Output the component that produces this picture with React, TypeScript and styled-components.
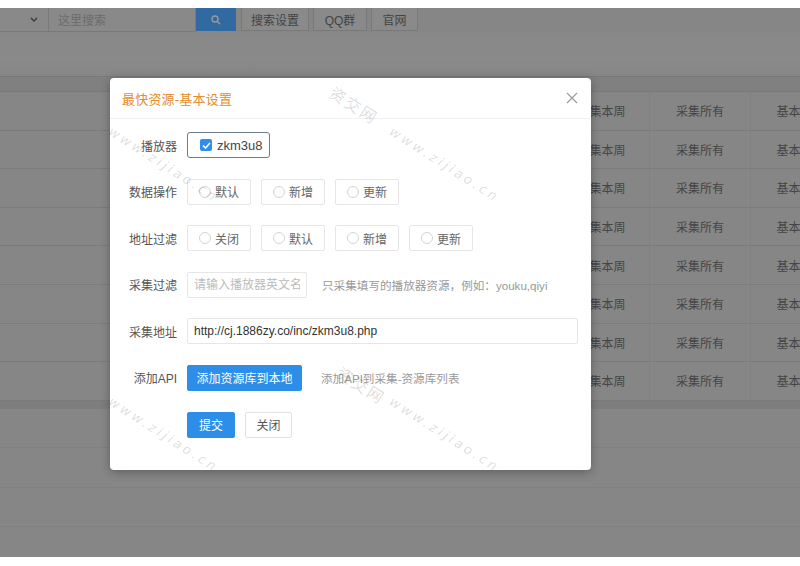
import React from "react";
import styled, { createGlobalStyle } from "styled-components";

const Global = createGlobalStyle`
  html, body { margin: 0; padding: 0; background: #fff; }
  body { font-family: "Liberation Sans", "Noto Sans CJK SC", sans-serif; }
  * { box-sizing: border-box; }
`;

const FONT = `"Liberation Sans", "Noto Sans CJK SC", sans-serif`;

const Screen = styled.div`
  position: relative;
  width: 800px;
  height: 566px;
  padding-top: 8px;
  overflow: hidden;
  background: #fff;
`;

const Page = styled.div`
  position: relative;
  height: 549px;
  background: #d2d2d2;
  overflow: hidden;
  display: flex;
  flex-direction: column;
`;

const Toolbar = styled.div`
  display: flex;
  height: 24px;
  align-items: stretch;
`;

const SelectBox = styled.div`
  width: 48px;
  display: flex;
  align-items: center;
  justify-content: flex-end;
  padding-right: 10px;
  background: #d6d6d6;
  border-bottom: 1px solid #bdbdbd;
`;

const SearchInput = styled.div`
  width: 148px;
  display: flex;
  align-items: center;
  padding-left: 9px;
  font-size: 12px;
  color: #a9a9a9;
  background: #d6d6d6;
  border: 1px solid #bdbdbd;
  border-top: none;
`;

const SearchBtn = styled.div`
  width: 40px;
  height: 23px;
  display: flex;
  align-items: center;
  justify-content: center;
  background: #4ea4fc;
`;

const ToolBtn = styled.div<{ $w: number; $ml: number }>`
  width: ${(p) => p.$w}px;
  margin-left: ${(p) => p.$ml}px;
  height: 23px;
  display: flex;
  align-items: center;
  justify-content: center;
  font-size: 12px;
  color: #6a6a6a;
  background: #d8d8d8;
  border: 1px solid #bdbdbd;
  border-top: none;
`;

const Spacer = styled.div`
  height: 45px;
  background: linear-gradient(#d4d4d4, #d8d8d8 60%, #d2d2d2);
  border-bottom: 1px solid #bcbcbc;
`;

const TableHead = styled.div`
  height: 15px;
  background: #c8c8c8;
  border-bottom: 1px solid #bdbdbd;
`;

const Row = styled.div`
  display: grid;
  grid-template-columns: 553px 96px 101px 100px;
  height: 38.6px;
  border-bottom: 1px solid #c0c0c0;
`;

const Cell = styled.div`
  display: flex;
  align-items: center;
  justify-content: center;
  font-size: 12px;
  color: #6c6c6c;
  border-left: 1px solid #c8c8c8;
  white-space: nowrap;
  &:first-child { border-left: none; }
`;

const TableFoot = styled.div`
  height: 8px;
  background: #c6c6c6;
`;

const BlankRow = styled.div`
  height: 39.5px;
  border-bottom: 1px solid #c8c8c8;
`;

const Shade = styled.div`
  position: absolute;
  inset: 0;
  background: rgba(0, 0, 0, 0.36);
`;

const Modal = styled.div`
  position: absolute;
  left: 110px;
  top: 78px;
  width: 481px;
  height: 392px;
  background: #fff;
  border-radius: 4px;
  box-shadow: 0 2px 10px rgba(0, 0, 0, 0.3);
  overflow: hidden;
  display: flex;
  flex-direction: column;
`;

const ModalHeader = styled.div`
  height: 41px;
  flex: none;
  display: flex;
  align-items: center;
  justify-content: space-between;
  padding: 0 13px 0 12px;
  border-bottom: 1px solid #efefef;
`;

const Title = styled.div`
  font-size: 13px;
  color: #e38d2c;
  letter-spacing: 0.2px;
`;

const CloseX = styled.div`
  width: 12px;
  height: 12px;
  display: flex;
`;

const Body = styled.div`
  padding-top: 13px;
  display: flex;
  flex-direction: column;
  gap: 20.6px;
`;

const FormRow = styled.div`
  display: flex;
  align-items: center;
  height: 26px;
`;

const Label = styled.div`
  width: 67px;
  margin-right: 10px;
  text-align: right;
  font-size: 12px;
  color: #555;
  white-space: nowrap;
`;

const Indent = styled.div`
  width: 77px;
  flex: none;
`;

const Options = styled.div`
  display: flex;
  gap: 10px;
`;

const CheckChip = styled.div`
  width: 83px;
  height: 26px;
  display: flex;
  align-items: center;
  gap: 5px;
  padding-left: 12px;
  border: 1px solid #6b7c8c;
  border-radius: 3px;
  font-size: 13px;
  color: #444;
`;

const CheckBox = styled.span`
  width: 12px;
  height: 12px;
  border-radius: 2px;
  background: #2f8ded;
  display: flex;
  align-items: center;
  justify-content: center;
`;

const RadioOpt = styled.div`
  width: 64px;
  height: 26px;
  display: flex;
  align-items: center;
  gap: 4px;
  padding-left: 11px;
  border: 1px solid #e6e6e6;
  border-radius: 2px;
  font-size: 12px;
  color: #666;
`;

const Circle = styled.span`
  width: 12px;
  height: 12px;
  border: 1px solid #d4d4d4;
  border-radius: 50%;
`;

const TextInput = styled.input<{ $w: number }>`
  width: ${(p) => p.$w}px;
  height: 26px;
  padding: 0 6px;
  border: 1px solid #e6e6e6;
  border-radius: 2px;
  font-family: ${FONT};
  font-size: 12px;
  color: #333;
  outline: none;
  &::placeholder { color: #bbb; }
`;

const Help = styled.div<{ $ml: number }>`
  margin-left: ${(p) => p.$ml}px;
  font-size: 11.6px;
  color: #999;
  white-space: nowrap;
`;

const Button = styled.div<{ $w: number; $primary?: boolean; $ml?: number }>`
  width: ${(p) => p.$w}px;
  height: 26px;
  margin-left: ${(p) => p.$ml ?? 0}px;
  display: flex;
  align-items: center;
  justify-content: center;
  font-size: 12px;
  border-radius: 2px;
  background: ${(p) => (p.$primary ? "#2c8ee8" : "#fff")};
  color: ${(p) => (p.$primary ? "#fff" : "#555")};
  border: 1px solid ${(p) => (p.$primary ? "#2c8ee8" : "#e2e2e2")};
`;

const Watermark = styled.span<{ $x: number; $y: number; $cjk?: boolean }>`
  position: absolute;
  left: ${(p) => p.$x}px;
  top: ${(p) => p.$y}px;
  transform: rotate(32.5deg);
  transform-origin: left top;
  font-family: "DejaVu Sans", "Noto Sans CJK SC", sans-serif;
  font-size: ${(p) => (p.$cjk ? 16 : 13)}px;
  font-style: ${(p) => (p.$cjk ? "normal" : "italic")};
  letter-spacing: ${(p) => (p.$cjk ? 2 : 3)}px;
  color: rgba(0, 0, 0, 0.15);
  white-space: nowrap;
  pointer-events: none;
`;

const rows = Array.from({ length: 8 });

export default function App() {
  return (
    <>
      <Global />
      <Screen>
        <Page>
          <Toolbar>
            <SelectBox>
              <svg width="8" height="5" viewBox="0 0 8 5">
                <path d="M1 1 L4 4 L7 1" stroke="#5a5a5a" strokeWidth="1.4" fill="none" />
              </svg>
            </SelectBox>
            <SearchInput>这里搜索</SearchInput>
            <SearchBtn>
              <svg width="10" height="10" viewBox="0 0 10 10">
                <circle cx="4" cy="4" r="3" stroke="#e8f0f8" strokeWidth="1.4" fill="none" />
                <path d="M6.2 6.2 L9 9" stroke="#e8f0f8" strokeWidth="1.5" />
              </svg>
            </SearchBtn>
            <ToolBtn $w={68} $ml={5}>搜索设置</ToolBtn>
            <ToolBtn $w={54} $ml={4}>QQ群</ToolBtn>
            <ToolBtn $w={47} $ml={4}>官网</ToolBtn>
          </Toolbar>
          <Spacer />
          <TableHead />
          {rows.map((_, i) => (
            <Row key={i}>
              <Cell />
              <Cell>采集本周</Cell>
              <Cell>采集所有</Cell>
              <Cell>基本设置</Cell>
            </Row>
          ))}
          <TableFoot />
          <BlankRow />
          <BlankRow />
          <BlankRow />
          <Shade />
        </Page>

        <Modal>
          <ModalHeader>
            <Title>最快资源-基本设置</Title>
            <CloseX>
              <svg width="12" height="12" viewBox="0 0 12 12">
                <path d="M1 1 L11 11 M11 1 L1 11" stroke="#9a9a9a" strokeWidth="1.2" />
              </svg>
            </CloseX>
          </ModalHeader>
          <Body>
            <FormRow>
              <Label>播放器</Label>
              <CheckChip>
                <CheckBox>
                  <svg width="9" height="7" viewBox="0 0 9 7">
                    <path d="M1 3.5 L3.5 6 L8 1" stroke="#fff" strokeWidth="1.6" fill="none" />
                  </svg>
                </CheckBox>
                zkm3u8
              </CheckChip>
            </FormRow>
            <FormRow>
              <Label>数据操作</Label>
              <Options>
                {["默认", "新增", "更新"].map((t) => (
                  <RadioOpt key={t}>
                    <Circle />
                    {t}
                  </RadioOpt>
                ))}
              </Options>
            </FormRow>
            <FormRow>
              <Label>地址过滤</Label>
              <Options>
                {["关闭", "默认", "新增", "更新"].map((t) => (
                  <RadioOpt key={t}>
                    <Circle />
                    {t}
                  </RadioOpt>
                ))}
              </Options>
            </FormRow>
            <FormRow>
              <Label>采集过滤</Label>
              <TextInput $w={120} placeholder="请输入播放器英文名称" readOnly />
              <Help $ml={15}>只采集填写的播放器资源，例如：youku,qiyi</Help>
            </FormRow>
            <FormRow>
              <Label>采集地址</Label>
              <TextInput $w={391} defaultValue="http://cj.1886zy.co/inc/zkm3u8.php" readOnly />
            </FormRow>
            <FormRow>
              <Label>添加API</Label>
              <Button $w={115} $primary>添加资源库到本地</Button>
              <Help $ml={19}>添加API到采集-资源库列表</Help>
            </FormRow>
            <FormRow>
              <Indent />
              <Button $w={48} $primary>提交</Button>
              <Button $w={47} $ml={10}>关闭</Button>
            </FormRow>
          </Body>
          <Watermark $x={228} $y={2} $cjk>资交网</Watermark>
          <Watermark $x={285} $y={46}>www.zijiao.cn</Watermark>
          <Watermark $x={4} $y={46}>www.zijiao.cn</Watermark>
          <Watermark $x={235} $y={282} $cjk>资交网</Watermark>
          <Watermark $x={285} $y={316}>www.zijiao.cn</Watermark>
          <Watermark $x={4} $y={316}>www.zijiao.cn</Watermark>
        </Modal>
      </Screen>
    </>
  );
}
